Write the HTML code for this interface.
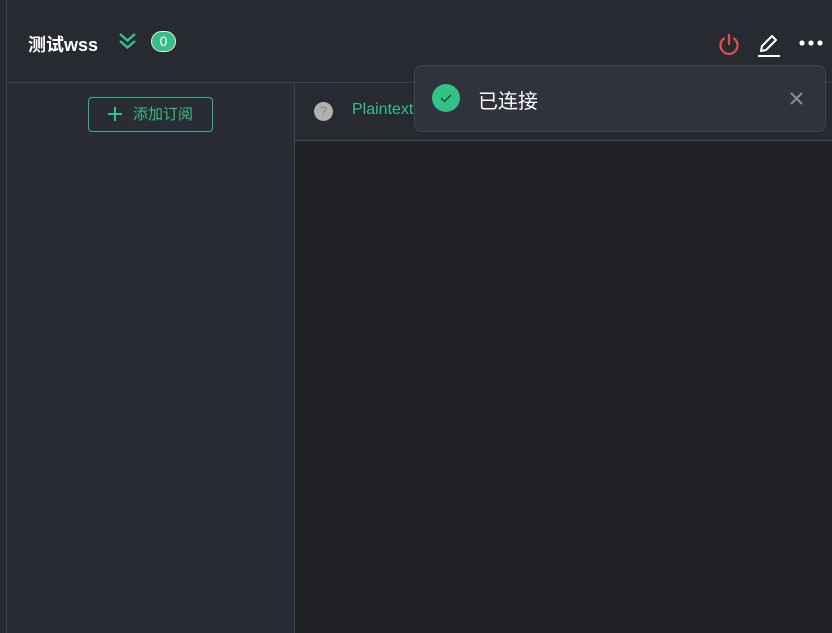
<!DOCTYPE html>
<html><head><meta charset="utf-8"><style>
*{margin:0;padding:0;box-sizing:border-box}
body{width:832px;height:633px;background:#282a32;overflow:hidden;position:relative;font-family:"Liberation Sans","Noto Sans CJK SC",sans-serif}
.strip{position:absolute;left:0;top:0;width:7px;height:633px;background:#282a32;border-right:1px solid #3e404a}
.hdr{position:absolute;left:7px;top:0;width:825px;height:83px;background:#282a32;border-bottom:1px solid #3e404a}
.title{position:absolute;left:28px;top:31px;color:#fff;font-weight:bold;font-size:18px}
.badge{position:absolute;left:151px;top:31px;width:25px;height:21px;border-radius:11px;background:#34c185;border:1px solid #e8e8e8;color:#fff;font-size:14px;text-align:center;line-height:19px}
.left{position:absolute;left:7px;top:83px;width:288px;height:550px;background:#292c35;border-right:1px solid #42444f}
.btn{position:absolute;left:88px;top:97px;width:125px;height:35px;border:1px solid #2fb87a;border-radius:4px;color:#34c185;font-size:15px;line-height:33px}
.main{position:absolute;left:295px;top:83px;width:537px;height:550px;background:#212226}
.sub{position:absolute;left:295px;top:83px;width:537px;height:58px;background:#282a32;border-bottom:1px solid #42444f}
.q{position:absolute;left:314px;top:102px;width:19px;height:19px;border-radius:50%;background:#b0b0b0;color:#888;font-size:12px;text-align:center;line-height:19px}
.pt{position:absolute;left:352px;top:101px;color:#34c185;font-size:16px}
.toast{position:absolute;left:414px;top:65px;width:412px;height:67px;background:#30323e;border:1px solid #434552;border-radius:8px}
.ok{position:absolute;left:17px;top:18px;width:28px;height:28px;border-radius:50%;background:#34c185}
.tt{position:absolute;left:63px;top:19px;color:#fff;font-size:20px}
</style></head><body>
<div class="hdr"></div><div class="strip"></div>
<div class="title">测试wss</div>
<svg style="position:absolute;left:118px;top:31px" width="19" height="19" viewBox="0 0 19 19" fill="none" stroke="#34c185" stroke-width="2.4"><path d="M2 3l7.5 6.5L17 3M2 10l7.5 6.5L17 10"/></svg>
<div class="badge">0</div>
<svg style="position:absolute;left:717px;top:33px" width="24" height="24" viewBox="0 0 24 24" fill="none" stroke="#e84e50" stroke-width="2.2" stroke-linecap="round"><path d="M12 2v9M7 5.5a8.5 8.5 0 1 0 10 0"/></svg>
<svg style="position:absolute;left:756px;top:32px" width="26" height="26" viewBox="0 0 26 26" fill="none" stroke="#fff" stroke-width="2" stroke-linejoin="round"><path d="M5 19l1-5L16 4l4 4-10 10z M2 24h22"/></svg>
<svg style="position:absolute;left:798px;top:38px" width="26" height="10"><circle cx="4" cy="5" r="2.6" fill="#fff"/><circle cx="13" cy="5" r="2.6" fill="#fff"/><circle cx="22" cy="5" r="2.6" fill="#fff"/></svg>
<div class="left"></div>
<div class="btn"><svg style="position:absolute;left:19px;top:9px" width="14" height="14" fill="none" stroke="#34c185" stroke-width="2"><path d="M7 0v14M0 7h14"/></svg><span style="position:absolute;left:44px">添加订阅</span></div>
<div class="main"></div><div class="sub"></div>
<div class="q">?</div>
<div class="pt">Plaintext</div>
<div class="toast"><div class="ok"><svg width="28" height="28" viewBox="0 0 28 28" fill="none" stroke="#1d5a3e" stroke-width="1.6"><path d="M9 14l3.5 3.5L19 11"/></svg></div>
<div class="tt">已连接</div>
<svg style="position:absolute;left:374px;top:25px" width="15" height="15" fill="none" stroke="#8a8c94" stroke-width="2"><path d="M2 2l11 11M13 2L2 13"/></svg></div>
</body></html>
